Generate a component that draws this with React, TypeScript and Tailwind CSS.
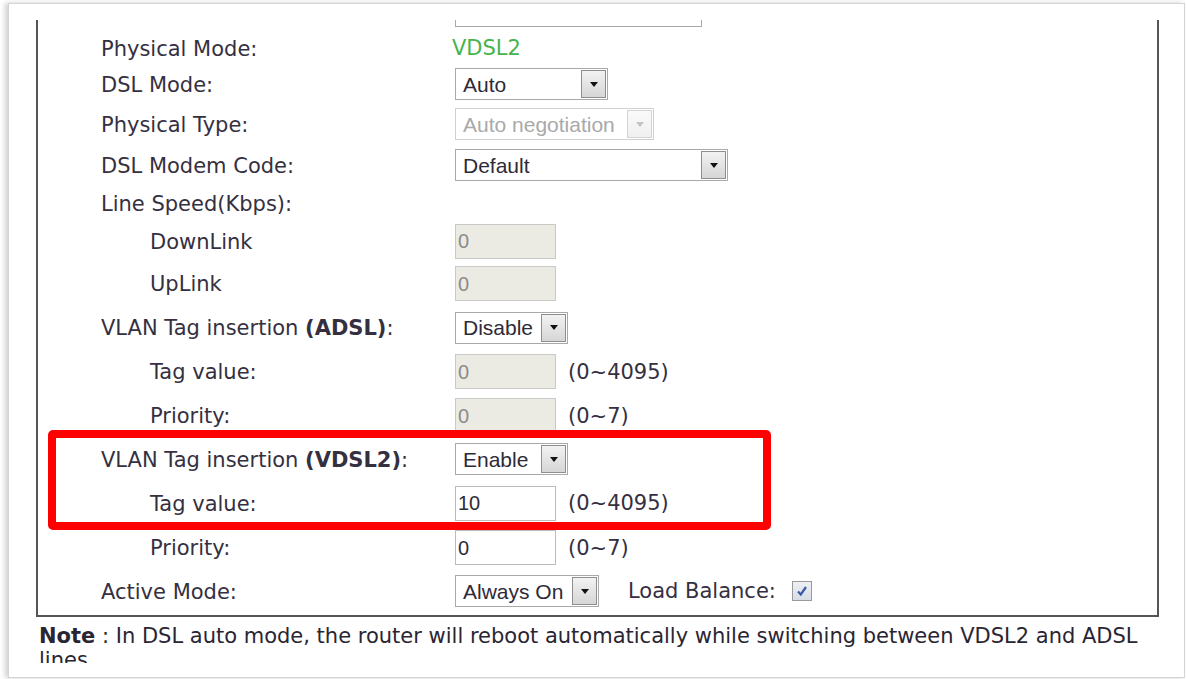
import React from 'react';

type Control =
  | { kind: 'text'; value: string }
  | { kind: 'select'; value: string; width: string; disabled?: boolean }
  | { kind: 'input'; value: string; disabled?: boolean; hint?: string };

type Row = {
  label: React.ReactNode;
  sub?: boolean;
  height: string;
  control?: Control;
  extra?: boolean;
};

const rows: Row[] = [
  { label: 'Physical Mode:', height: 'h-[34px]', control: { kind: 'text', value: 'VDSL2' } },
  { label: 'DSL Mode:', height: 'h-[38px]', control: { kind: 'select', value: 'Auto', width: 'w-[153px]' } },
  {
    label: 'Physical Type:',
    height: 'h-[42px]',
    control: { kind: 'select', value: 'Auto negotiation', width: 'w-[199px]', disabled: true },
  },
  { label: 'DSL Modem Code:', height: 'h-[40px]', control: { kind: 'select', value: 'Default', width: 'w-[273px]' } },
  { label: 'Line Speed(Kbps):', height: 'h-[36px]' },
  { label: 'DownLink', sub: true, height: 'h-[40px]', control: { kind: 'input', value: '0', disabled: true } },
  { label: 'UpLink', sub: true, height: 'h-[45px]', control: { kind: 'input', value: '0', disabled: true } },
  {
    label: (
      <>
        VLAN Tag insertion <b>(ADSL)</b>:
      </>
    ),
    height: 'h-[43px]',
    control: { kind: 'select', value: 'Disable', width: 'w-[113px]' },
  },
  {
    label: 'Tag value:',
    sub: true,
    height: 'h-[45px]',
    control: { kind: 'input', value: '0', disabled: true, hint: '(0~4095)' },
  },
  {
    label: 'Priority:',
    sub: true,
    height: 'h-[43px]',
    control: { kind: 'input', value: '0', disabled: true, hint: '(0~7)' },
  },
  {
    label: (
      <>
        VLAN Tag insertion <b>(VDSL2)</b>:
      </>
    ),
    height: 'h-[44px]',
    control: { kind: 'select', value: 'Enable', width: 'w-[113px]' },
  },
  { label: 'Tag value:', sub: true, height: 'h-[44px]', control: { kind: 'input', value: '10', hint: '(0~4095)' } },
  { label: 'Priority:', sub: true, height: 'h-[45px]', control: { kind: 'input', value: '0', hint: '(0~7)' } },
  {
    label: 'Active Mode:',
    height: 'h-[42px]',
    control: { kind: 'select', value: 'Always On', width: 'w-[144px]' },
    extra: true,
  },
];

const Arrow = ({ disabled }: { disabled?: boolean }) => (
  <div
    className={`m-[1px] flex w-[25px] items-center justify-center border bg-gradient-to-b ${
      disabled
        ? 'border-[#d4d4d4] from-[#fafafa] to-[#f0f0f0]'
        : 'border-[#8e8e8e] from-[#f2f2f2] to-[#d6d6d6]'
    }`}
  >
    <div
      className={`h-0 w-0 border-x-[4px] border-t-[5px] border-x-transparent ${
        disabled ? 'border-t-[#c4c4c4]' : 'border-t-[#111]'
      }`}
    />
  </div>
);

const Select = ({ value, width, disabled }: { value: string; width: string; disabled?: boolean }) => (
  <div
    className={`flex h-[32px] ${width} border bg-white font-['Liberation_Sans',Arial,sans-serif] text-[21px] ${
      disabled ? 'border-[#d0d0d0] text-[#a9a9a9]' : 'border-[#a9a9a9] text-[#2e2a38]'
    }`}
  >
    <span className="flex flex-1 items-center pl-[7px] leading-none">{value}</span>
    <Arrow disabled={disabled} />
  </div>
);

const TextInput = ({ value, disabled }: { value: string; disabled?: boolean }) => (
  <div
    className={`flex h-[35px] w-[101px] items-center border pl-[2px] font-['Liberation_Sans',Arial,sans-serif] text-[20px] leading-none ${
      disabled ? 'border-[#c9c9c9] bg-[#ebebe4] text-[#8c8c8c]' : 'border-[#bcbcbc] bg-white text-[#2e2a38]'
    }`}
  >
    {value}
  </div>
);

const Checkbox = () => (
  <div className="ml-[16px] flex h-[20px] w-[20px] items-center justify-center border border-[#9a9a9a] bg-gradient-to-b from-[#eef0f4] to-[#d8dce4]">
    <svg width="14" height="14" viewBox="0 0 14 14">
      <path d="M3 7.5 L5.8 10.5 L11 3" fill="none" stroke="#3a5aa8" strokeWidth="2.2" />
    </svg>
  </div>
);

const FieldControl = ({ control, extra }: { control: Control; extra?: boolean }) => {
  if (control.kind === 'text') {
    return <span className="-ml-[3px] pt-[2px] text-[#46b34c]">{control.value}</span>;
  }
  if (control.kind === 'select') {
    return (
      <div className="flex items-center">
        <Select value={control.value} width={control.width} disabled={control.disabled} />
        {extra && (
          <>
            <span className="ml-[29px] pt-[2px]">Load Balance:</span>
            <Checkbox />
          </>
        )}
      </div>
    );
  }
  return (
    <div className="flex items-center">
      <TextInput value={control.value} disabled={control.disabled} />
      {control.hint && <span className="ml-[12px] pt-[2px]">{control.hint}</span>}
    </div>
  );
};

export default function App() {
  return (
    <div className="relative h-[679px] w-[1186px] overflow-hidden bg-white pl-[8px] pr-[1px] pt-[3px] font-['DejaVu_Sans',Verdana,sans-serif] text-[21px] text-[#35303f]">
      <div className="h-[675px] border border-[#d4d4d4] bg-white shadow-[-3px_0_5px_rgba(0,0,0,0.18)]">
        <div className="h-[659px] overflow-hidden pl-[27px] pr-[25px] pt-[16px]">
          {/* WAN DSL settings group */}
          <div className="border-x-2 border-b-2 border-[#555] pb-[3px]">
            <div className="flex h-[11px]">
              <div className="w-[417px]" />
              <div className="h-[7px] w-[247px] border-x border-b border-[#a8a8a8]" />
            </div>
            {rows.map((row, i) => (
              <div key={i} className={`flex items-center ${row.height}`}>
                <div className={`w-[417px] shrink-0 pt-[2px] leading-none ${row.sub ? 'pl-[112px]' : 'pl-[63px]'}`}>
                  {row.label}
                </div>
                {row.control && <FieldControl control={row.control} extra={row.extra} />}
              </div>
            ))}
          </div>
          <p className="mt-[7px] pl-[3px] pr-[4px] leading-[24px] text-[#2a2533]">
            <b>Note</b> : In DSL auto mode, the router will reboot automatically while switching between VDSL2 and ADSL
            lines
          </p>
        </div>
      </div>

      {/* highlight around the VDSL2 VLAN settings */}
      <div className="absolute left-[48px] top-[430px] h-[100px] w-[723px] rounded-[5px] border-[8px] border-[#ff0000]" />
    </div>
  );
}
